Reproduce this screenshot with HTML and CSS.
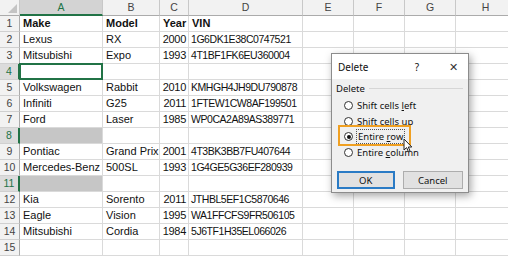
FILE: index.html
```html
<!DOCTYPE html>
<html lang="en">
<head>
    <meta charset="UTF-8">
    <meta name="viewport" content="width=device-width, initial-scale=1.0">
    <title>Delete rows</title>
    <link rel="stylesheet" href="styles.css">
</head>
<body>
    <div id="sheet">
        <div class="row head">
            <div class="corner"><span class="tri"></span></div>
            <div class="col sel">A</div>
            <div class="col">B</div>
            <div class="col">C</div>
            <div class="col">D</div>
            <div class="col">E</div>
            <div class="col">F</div>
            <div class="col">G</div>
            <div class="col">H</div>
        </div>
        <div class="row bold">
            <div class="num">1</div>
            <div class="cell">Make</div><div class="cell">Model</div><div class="cell">Year</div><div class="cell">VIN</div>
            <div class="cell"></div><div class="cell"></div><div class="cell"></div><div class="cell"></div>
        </div>
        <div class="row">
            <div class="num">2</div>
            <div class="cell">Lexus</div><div class="cell">RX</div><div class="cell year">2000</div><div class="cell vin">1G6DK1E38C0747521</div>
            <div class="cell"></div><div class="cell"></div><div class="cell"></div><div class="cell"></div>
        </div>
        <div class="row">
            <div class="num">3</div>
            <div class="cell">Mitsubishi</div><div class="cell">Expo</div><div class="cell year">1993</div><div class="cell vin">4T1BF1FK6EU360004</div>
            <div class="cell"></div><div class="cell"></div><div class="cell"></div><div class="cell"></div>
        </div>
        <div class="row">
            <div class="num sel">4</div>
            <div class="cell active"></div><div class="cell"></div><div class="cell"></div><div class="cell"></div>
            <div class="cell"></div><div class="cell"></div><div class="cell"></div><div class="cell"></div>
        </div>
        <div class="row">
            <div class="num">5</div>
            <div class="cell">Volkswagen</div><div class="cell">Rabbit</div><div class="cell year">2010</div><div class="cell vin">KMHGH4JH9DU790878</div>
            <div class="cell"></div><div class="cell"></div><div class="cell"></div><div class="cell"></div>
        </div>
        <div class="row">
            <div class="num">6</div>
            <div class="cell">Infiniti</div><div class="cell">G25</div><div class="cell year">2011</div><div class="cell vin">1FTEW1CW8AF199501</div>
            <div class="cell"></div><div class="cell"></div><div class="cell"></div><div class="cell"></div>
        </div>
        <div class="row">
            <div class="num">7</div>
            <div class="cell">Ford</div><div class="cell">Laser</div><div class="cell year">1985</div><div class="cell vin">WP0CA2A89AS389771</div>
            <div class="cell"></div><div class="cell"></div><div class="cell"></div><div class="cell"></div>
        </div>
        <div class="row">
            <div class="num sel">8</div>
            <div class="cell picked"></div><div class="cell"></div><div class="cell"></div><div class="cell"></div>
            <div class="cell"></div><div class="cell"></div><div class="cell"></div><div class="cell"></div>
        </div>
        <div class="row">
            <div class="num">9</div>
            <div class="cell">Pontiac</div><div class="cell">Grand Prix</div><div class="cell year">2001</div><div class="cell vin">4T3BK3BB7FU407644</div>
            <div class="cell"></div><div class="cell"></div><div class="cell"></div><div class="cell"></div>
        </div>
        <div class="row">
            <div class="num">10</div>
            <div class="cell">Mercedes-Benz</div><div class="cell">500SL</div><div class="cell year">1993</div><div class="cell vin">1G4GE5G36EF280939</div>
            <div class="cell"></div><div class="cell"></div><div class="cell"></div><div class="cell"></div>
        </div>
        <div class="row">
            <div class="num sel">11</div>
            <div class="cell picked"></div><div class="cell"></div><div class="cell"></div><div class="cell"></div>
            <div class="cell"></div><div class="cell"></div><div class="cell"></div><div class="cell"></div>
        </div>
        <div class="row">
            <div class="num">12</div>
            <div class="cell">Kia</div><div class="cell">Sorento</div><div class="cell year">2011</div><div class="cell vin">JTHBL5EF1C5870646</div>
            <div class="cell"></div><div class="cell"></div><div class="cell"></div><div class="cell"></div>
        </div>
        <div class="row">
            <div class="num">13</div>
            <div class="cell">Eagle</div><div class="cell">Vision</div><div class="cell year">1995</div><div class="cell vin">WA1FFCFS9FR506105</div>
            <div class="cell"></div><div class="cell"></div><div class="cell"></div><div class="cell"></div>
        </div>
        <div class="row">
            <div class="num">14</div>
            <div class="cell">Mitsubishi</div><div class="cell">Cordia</div><div class="cell year">1984</div><div class="cell vin">5J6TF1H35EL066026</div>
            <div class="cell"></div><div class="cell"></div><div class="cell"></div><div class="cell"></div>
        </div>
        <div class="row">
            <div class="num">15</div>
            <div class="cell"></div><div class="cell"></div><div class="cell"></div><div class="cell"></div>
            <div class="cell"></div><div class="cell"></div><div class="cell"></div><div class="cell"></div>
        </div>
    </div>

    <div id="dialog">
        <div class="title">
            <span class="title-text">Delete</span>
            <span class="help">?</span>
            <span class="close">&#x2715;</span>
        </div>
        <div class="body">
            <div class="group">
                <span>Delete</span>
                <span class="rule"></span>
            </div>
            <label class="opt"><span class="radio"></span><span>Shift cells <u>l</u>eft</span></label>
            <label class="opt"><span class="radio"></span><span>Shift cells <u>u</u>p</span></label>
            <label class="opt picked-opt"><span class="radio on"></span><span class="focus">Entire <u>r</u>ow</span></label>
            <label class="opt"><span class="radio"></span><span>Entire <u>c</u>olumn</span></label>
            <div class="buttons">
                <button class="btn default">OK</button>
                <button class="btn">Cancel</button>
            </div>
        </div>
    </div>

    <svg class="pointer" width="10" height="15" viewBox="0 0 10 15">
        <path d="M1 1 L1 12 L3.6 9.6 L5.4 13.6 L7 12.9 L5.3 9 L8.8 9 Z" fill="#fff" stroke="#222" stroke-width="1" stroke-linejoin="round"/>
    </svg>
</body>
</html>
```

FILE: styles.css
```css
body {
    margin: 0;
    width: 508px;
    height: 256px;
    overflow: hidden;
    background: #fff;
    font-family: "Liberation Sans", Arial, sans-serif;
    position: relative;
}

.row {
    display: grid;
    grid-template-columns: 20px 83px 57px 29px 114px 51px 51px 51px 60px;
    height: 16px;
}

.row > div {
    box-sizing: border-box;
    border-right: 1px solid #dadada;
    border-bottom: 1px solid #dadada;
    font-size: 11px;
    line-height: 15px;
    color: #111;
    padding-left: 3px;
    white-space: nowrap;
    overflow: hidden;
}

.row.bold .cell {
    font-weight: bold;
}

.head > div {
    background: #f2f2f2;
    border-right: 1px solid #c8c8c8;
    border-bottom: 1px solid #ababab;
    text-align: center;
    padding-left: 0;
    color: #444;
    font-size: 10.5px;
}

.head .col.sel {
    background: #d3d3d3;
    color: #217346;
    border-bottom: 2px solid #217346;
}

.corner {
    position: relative;
}

.tri {
    position: absolute;
    right: 2px;
    bottom: 2px;
    width: 0;
    height: 0;
    border-left: 9px solid transparent;
    border-bottom: 9px solid #c4c4c4;
}

.row > .num {
    background: #f2f2f2;
    border-right: 1px solid #ababab;
    border-bottom: 1px solid #d0d0d0;
    text-align: center;
    padding-left: 0;
    color: #444;
    font-size: 10.5px;
}

.row > .num.sel {
    background: #dcdcdc;
    color: #217346;
    border-right: 2px solid #217346;
}

.row > .year {
    text-align: right;
    padding: 0 2px 0 0;
    letter-spacing: -0.3px;
}

.row > .vin {
    font-size: 10.5px;
    letter-spacing: -0.45px;
    padding-left: 2px;
}

.row > .active {
    border: 2px solid #217346;
    margin: -1px 0 0 -1px;
    width: 84px;
    height: 17px;
}

.row > .picked {
    background: #c6c6c6;
}

/* dialog over the grid */
#dialog {
    position: absolute;
    left: 331px;
    top: 53px;
    width: 138px;
    height: 140px;
    box-sizing: border-box;
    border: 1px solid #8c8c8c;
    background: #f0f0f0;
    box-shadow: 2px 3px 8px rgba(0, 0, 0, 0.35);
    font-family: "Noto Sans", "Open Sans", sans-serif;
    font-size: 9.5px;
    color: #111;
    display: flex;
    flex-direction: column;
}

.title {
    height: 25px;
    background: #fff;
    display: flex;
    align-items: center;
    padding: 0 0 0 6px;
}

.title-text {
    flex: 1;
    font-size: 10px;
}

.help {
    width: 14px;
    text-align: center;
    margin-right: 22px;
    font-size: 10px;
}

.close {
    width: 14px;
    text-align: center;
    margin-right: 8px;
    font-size: 11px;
    color: #333;
}

.body {
    flex: 1;
    padding: 2px 5px 0 4px;
    display: flex;
    flex-direction: column;
}

.group {
    display: flex;
    align-items: center;
    gap: 4px;
    height: 14px;
    margin-bottom: 3px;
}

.rule {
    flex: 1;
    height: 1px;
    background: #d6d6d6;
}

.opt {
    display: flex;
    align-items: center;
    height: 15.5px;
    padding-left: 8px;
    gap: 4px;
    position: relative;
}

.radio {
    width: 9px;
    height: 9px;
    box-sizing: border-box;
    border: 1px solid #333;
    border-radius: 50%;
    background: #fff;
    position: relative;
}

.radio.on::after {
    content: "";
    position: absolute;
    left: 1.5px;
    top: 1.5px;
    width: 4px;
    height: 4px;
    border-radius: 50%;
    background: #111;
}

.focus {
    outline: 1px dotted #555;
    outline-offset: 0;
    padding: 0 1px;
}

.picked-opt::before {
    content: "";
    position: absolute;
    left: 2px;
    top: -4px;
    width: 73px;
    height: 21px;
    box-sizing: border-box;
    border: 2px solid #f0a022;
}

.buttons {
    display: flex;
    gap: 8px;
    margin-top: 11px;
    padding-left: 1px;
}

.btn {
    font-family: inherit;
    font-size: 9.5px;
    height: 18px;
    width: 58px;
    padding: 0;
    background: #e1e1e1;
    border: 1px solid #adadad;
    color: #111;
}

.btn + .btn {
    width: 61px;
}

.btn.default {
    border: 2px solid #2a7bc5;
}

.pointer {
    position: absolute;
    left: 403px;
    top: 138px;
}
```
